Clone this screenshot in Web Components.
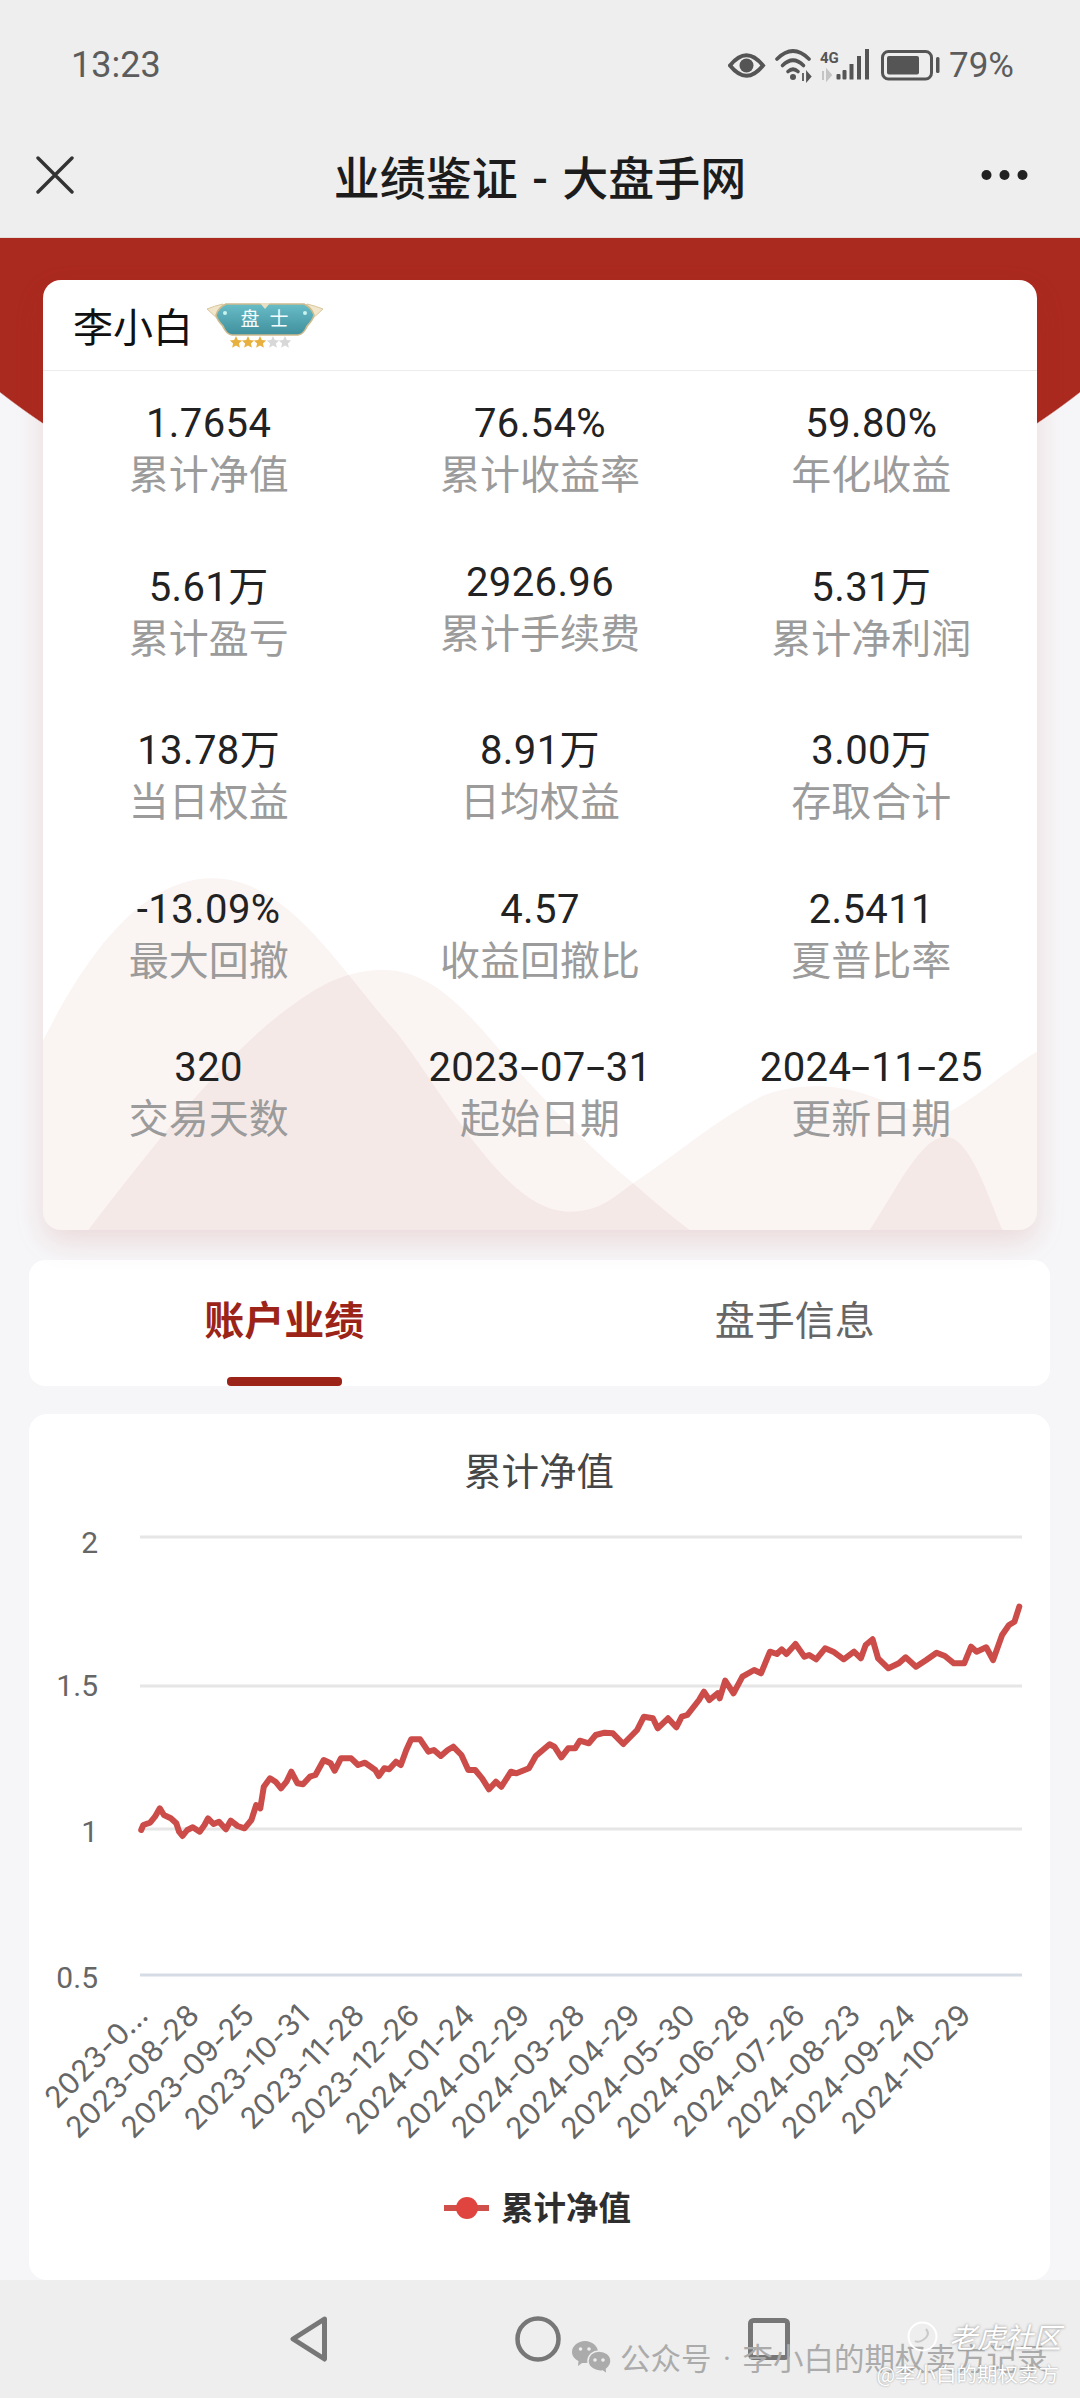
<!DOCTYPE html>
<html lang="zh">
<head>
<meta charset="utf-8">
<title>业绩鉴证 - 大盘手网</title>
<style>
  html, body { margin: 0; padding: 0; }
  body { width: 1080px; height: 2398px; overflow: hidden; font-family: Roboto, "Noto Sans CJK SC", sans-serif; }
</style>
</head>
<body>
<app-page>
  <status-bar slot="top" time="13:23" battery="79%"></status-bar>
  <title-bar slot="top">业绩鉴证 - 大盘手网</title-bar>

  <stat-card>
    <span slot="name">李小白</span>
    <stat-item value="1.7654">累计净值</stat-item>
    <stat-item value="76.54%">累计收益率</stat-item>
    <stat-item value="59.80%">年化收益</stat-item>
    <stat-item value="5.61万" wan>累计盈亏</stat-item>
    <stat-item value="2926.96">累计手续费</stat-item>
    <stat-item value="5.31万" wan>累计净利润</stat-item>
    <stat-item value="13.78万" wan>当日权益</stat-item>
    <stat-item value="8.91万" wan>日均权益</stat-item>
    <stat-item value="3.00万" wan>存取合计</stat-item>
    <stat-item value="-13.09%">最大回撤</stat-item>
    <stat-item value="4.57">收益回撤比</stat-item>
    <stat-item value="2.5411">夏普比率</stat-item>
    <stat-item value="320">交易天数</stat-item>
    <stat-item value="2023-07-31">起始日期</stat-item>
    <stat-item value="2024-11-25">更新日期</stat-item>
  </stat-card>

  <tab-bar>
    <tab-item active>账户业绩</tab-item>
    <tab-item>盘手信息</tab-item>
  </tab-bar>

  <nav-chart></nav-chart>

  <bottom-nav slot="bottom"></bottom-nav>
</app-page>

<script>
const CJK = 'Roboto, "Noto Sans CJK SC", sans-serif';

// Page frame: top bars, scrolling content with the red arc behind it, bottom nav
class AppPage extends HTMLElement {
  constructor() {
    super();
    this.attachShadow({ mode: 'open' });
    this.shadowRoot.innerHTML = `
      <style>
        :host { display: flex; flex-direction: column; width: 1080px; height: 2398px; font-family: ${CJK}; }
        main {
          flex: 1; min-height: 0; display: flex; flex-direction: column; padding-top: 42px;
          background: radial-gradient(760px 587px at 540px -258px, #ab2a1f 99.8%, rgba(171,42,31,0) 100%), #f6f6f8;
        }
      </style>
      <slot name="top"></slot>
      <main><slot></slot></main>
      <slot name="bottom"></slot>`;
  }
}

// Phone status bar
class StatusBar extends HTMLElement {
  constructor() {
    super();
    this.attachShadow({ mode: 'open' });
  }

  connectedCallback() {
    this.shadowRoot.innerHTML = `
      <style>
        :host { display: flex; align-items: center; justify-content: space-between; height: 130px; padding: 0 66px 0 71px; background: #eeeeee; color: #5c5c5c; font-size: 36px; box-sizing: border-box; }
        .right { display: flex; align-items: center; gap: 9px; }
        .right span { font-size: 35px; }
        svg { display: block; }
      </style>
      <span>${this.getAttribute('time')}</span>
      <div class="right">
        <svg width="212" height="36" viewBox="727 48 212 36" fill="none">
          <path d="M729 66.5Q745.5 46 762 66.5Q745.5 87 729 66.5Z" stroke="#555" stroke-width="4"/>
          <circle cx="745.5" cy="66.5" r="7" fill="#555"/>
          <g stroke="#555" stroke-width="3.6" stroke-linecap="round">
            <path d="M776 60Q792 44 808 60"/>
            <path d="M781.5 66.5Q792 56 802.5 66.5"/>
            <path d="M787 72.5Q792 68 797 72.5"/>
          </g>
          <circle cx="792" cy="78" r="3" fill="#555"/>
          <path d="M802 74v8M806 73.5l3.500 4-3.500 4z" stroke="#555" stroke-width="1.800" fill="#555"/>
          <text x="819" y="64" font-family="'Liberation Sans Narrow', Roboto, sans-serif" font-size="15" font-weight="700" fill="#555">4G</text>
          <path d="M822 72v9M826 71.500l4 4.500-4 4.500z" stroke="#c4c4c4" stroke-width="2" fill="#c4c4c4"/>
          <g fill="#555">
            <rect x="835.500" y="75" width="4" height="5.500" rx="1"/>
            <rect x="841.500" y="71" width="4" height="9.500" rx="1"/>
            <rect x="848.500" y="65" width="4" height="15.500"/>
            <rect x="856" y="57" width="4" height="23.500"/>
            <rect x="864" y="50" width="4" height="30.500"/>
          </g>
          <rect x="881.500" y="52.500" width="49" height="27.500" rx="6" stroke="#555" stroke-width="3"/>
          <rect x="886" y="57" width="32" height="18.500" rx="2" fill="#555"/>
          <rect x="935" y="58" width="3.500" height="16" rx="1.500" fill="#555"/>
        </svg>
        <span>${this.getAttribute('battery')}</span>
      </div>`;
  }
}

// WeChat style title bar with close and more buttons
class TitleBar extends HTMLElement {
  constructor() {
    super();
    this.attachShadow({ mode: 'open' });
    this.shadowRoot.innerHTML = `
      <style>
        :host { display: grid; grid-template-columns: 1fr auto 1fr; align-items: center; height: 108px; padding: 0 36px 18px; box-sizing: border-box; background: #eeeeee; border-bottom: 1px solid #e4ded8; color: #1c1c1c; }
        .title { font-size: 46px; font-weight: 500; word-spacing: 3px; }
        .more { justify-self: end; margin-right: 16px; }
        svg { display: block; }
      </style>
      <svg width="38" height="38" viewBox="0 0 38 38" fill="none" stroke="#333" stroke-width="3.4" stroke-linecap="round"><path d="M2 2L36 36M36 2L2 36"/></svg>
      <div class="title"><slot></slot></div>
      <svg class="more" width="47" height="12" viewBox="0 0 47 12" fill="#222"><circle cx="5.500" cy="6" r="5"/><circle cx="23.500" cy="6" r="5"/><circle cx="41.500" cy="6" r="5"/></svg>`;
  }
}

// Rank badge next to the trader name
class RankBadge extends HTMLElement {
  constructor() {
    super();
    this.attachShadow({ mode: 'open' });
    const star = (x, c) => `<path transform="translate(${x} 345)" d="M0-6L1.800-1.900 6.200-1.500 2.900 1.400 3.900 5.800 0 3.500-3.900 5.800-2.900 1.400-6.200-1.500-1.800-1.900Z" fill="${c}"/>`;
    this.shadowRoot.innerHTML = `
      <style>
        :host { display: block; width: 116px; height: 46px; }
        svg { display: block; }
        text { font-family: "Noto Sans CJK SC", sans-serif; font-size: 19px; fill: #f4fcfc; text-anchor: middle; }
      </style>
      <svg width="116" height="46" viewBox="207 305 116 46">
        <defs><linearGradient id="teal" x1="0" y1="0" x2="0" y2="1"><stop offset="0" stop-color="#68bdc7"/><stop offset="1" stop-color="#408f9d"/></linearGradient></defs>
        <path d="M207 312Q214 309 223 307L231 336 224 332 219 323Z" fill="#f1e5ca" stroke="#d8c69c"/>
        <path d="M323 312Q316 309 307 307L299 336 306 332 311 323Z" fill="#f1e5ca" stroke="#d8c69c"/>
        <path d="M226 307H304Q312 311 314 318Q313 323 307 329Q304 337 298 338H232Q226 337 223 329Q217 323 216 318Q218 311 226 307Z" fill="url(#teal)" stroke="#cdbb8e" stroke-width="1.500"/>
        <path d="M260 306h10l-5 6z" fill="#eadfc2"/>
        <circle cx="225" cy="316" r="2" fill="#c8f3ee"/><circle cx="305" cy="316" r="2" fill="#c8f3ee"/>
        <text x="250" y="329">盘</text><text x="279" y="329">士</text>
        ${star(236, '#e8b13f')}${star(248, '#e8b13f')}${star(260, '#e8b13f')}${star(273, '#d8d8d8')}${star(285, '#d8d8d8')}
      </svg>`;
  }
}

// Summary card: name row, 3 column grid of stats, mountains behind the lower rows
class StatCard extends HTMLElement {
  constructor() {
    super();
    this.attachShadow({ mode: 'open' });
    this.shadowRoot.innerHTML = `
      <style>
        :host { display: block; position: relative; margin: 0 43px 30px; background: #fff; border-radius: 18px; box-shadow: 0 12px 30px rgba(171,42,31,.13); overflow: hidden; }
        header { display: flex; align-items: center; gap: 14px; height: 90px; padding-left: 30px; border-bottom: 1px solid #ececec; font-size: 40px; color: #111; }
        .grid { position: relative; display: grid; grid-template-columns: repeat(3, 1fr); align-items: start; row-gap: 53.5px; padding: 29px 0 81px; }
        svg.bg { position: absolute; left: -3px; top: 580px; width: 1000px; height: 380px; }
        svg.bg path { fill: rgba(150,30,20,.05); }
      </style>
      <svg class="bg" viewBox="0 0 1568 1140" preserveAspectRatio="none">
        <path d="M0 560C60 330 150 55 270 55C390 55 470 330 560 520C640 720 730 1055 830 1055C880 1055 900 1010 930 970C1000 880 1060 780 1130 710C1180 670 1240 670 1290 700C1350 740 1400 790 1440 740C1490 680 1530 610 1568 570L1568 1140L0 1140Z"/>
        <path d="M75 1112C180 850 300 560 400 430C450 360 490 330 540 330C620 330 680 480 730 590C800 740 860 860 930 970C960 1020 990 1070 1020 1112Z"/>
        <path d="M1300 1112C1340 1000 1380 830 1420 830C1460 830 1490 1030 1510 1112Z"/>
      </svg>
      <header><slot name="name"></slot><rank-badge></rank-badge></header>
      <div class="grid"><slot></slot></div>`;
  }
}

// One figure in the grid; rows holding a 万 value sit a little lower
class StatItem extends HTMLElement {
  constructor() {
    super();
    this.attachShadow({ mode: 'open' });
  }

  connectedCallback() {
    const value = this.getAttribute('value') || '';
    // date hyphens are drawn wider in the reference
    const shown = /^\d{4}-/.test(value)
      ? value.replace(/-/g, '<span class="dash">-</span>')
      : value;
    this.shadowRoot.innerHTML = `
      <style>
        :host { display: block; text-align: center; }
        :host([wan]) { padding-top: 5px; }
        .value { font-size: 40px; line-height: 47px; color: #222; white-space: nowrap; letter-spacing: .4px; }
        .dash { display: inline-block; width: 20px; transform: scaleX(1.7); }
        .label { font-size: 40px; line-height: 58px; color: #9b9b9b; }
      </style>
      <div class="value">${shown}</div>
      <div class="label"><slot></slot></div>`;
  }
}

class TabBar extends HTMLElement {
  constructor() {
    super();
    this.attachShadow({ mode: 'open' });
    this.shadowRoot.innerHTML = `
      <style>
        :host { display: grid; grid-template-columns: 1fr 1fr; height: 126px; margin: 0 30px 0 29px; background: #fff; border-radius: 16px; }
      </style>
      <slot></slot>`;
  }
}

class TabItem extends HTMLElement {
  constructor() {
    super();
    this.attachShadow({ mode: 'open' });
    this.shadowRoot.innerHTML = `
      <style>
        :host { display: flex; flex-direction: column; align-items: center; font-size: 40px; color: #666; padding-top: 33px; box-sizing: border-box; }
        :host([active]) { color: #9c2318; font-weight: 700; }
        .text { line-height: 58px; }
        .bar { margin-top: auto; width: 115px; height: 9px; border-radius: 4px; background: transparent; }
        :host([active]) .bar { background: #9c2318; }
      </style>
      <div class="text"><slot></slot></div>
      <div class="bar"></div>`;
  }
}

// Net value line chart, coordinates in the SVG are page coordinates
class NavChart extends HTMLElement {
  constructor() {
    super();
    this.attachShadow({ mode: 'open' });
  }

  connectedCallback() {
    // traced from the reference, x is stretched 1.452 and y is (page - 1400) * 3
    const trace = [205,1290,208,1275,218,1268,225,1250,232,1225,238,1245,248,1255,256,1270,260,1295,265,1308,272,1290,280,1282,290,1295,297,1275,302,1255,310,1272,318,1265,328,1288,335,1262,345,1278,355,1285,365,1260,372,1215,378,1225,383,1160,392,1135,400,1145,408,1165,416,1145,423,1115,432,1150,440,1153,450,1130,458,1125,470,1080,480,1090,486,1112,495,1075,510,1075,520,1095,530,1088,545,1110,550,1128,558,1105,565,1108,575,1085,582,1095,590,1050,597,1018,610,1018,622,1055,630,1050,640,1068,650,1050,658,1040,670,1065,680,1110,690,1110,700,1135,710,1168,720,1145,728,1160,742,1115,750,1120,768,1105,778,1068,798,1033,805,1040,815,1072,825,1045,835,1045,842,1022,855,1030,865,1005,878,998,890,1000,905,1032,925,990,935,950,948,955,955,985,970,955,982,982,990,950,998,945,1015,900,1022,875,1030,900,1042,880,1045,895,1053,842,1065,880,1078,830,1095,810,1105,820,1118,755,1128,762,1135,748,1142,762,1155,732,1168,770,1175,765,1185,778,1198,745,1210,755,1225,778,1240,755,1250,775,1257,735,1267,718,1275,775,1290,805,1305,790,1315,772,1330,800,1345,780,1360,758,1372,768,1385,790,1400,790,1410,740,1418,755,1432,742,1442,780,1455,705,1465,675,1473,665,1480,620];
    const pts = [];
    for (let i = 0; i < trace.length; i += 2) {
      pts.push((trace[i] / 1.452).toFixed(1) + ',' + (trace[i + 1] / 3 + 1400).toFixed(1));
    }

    const grid = [[1537, '2', 1553], [1686, '1.5', 1696], [1829, '1', 1842], [1975, '0.5', 1988]];
    const gridSvg = grid.map(([y, t, by], i) => `
      <line x1="140" x2="1022" y1="${y}" y2="${y}" stroke="${i === 3 ? '#d5dce4' : '#e6e6e6'}" stroke-width="3"/>
      <text x="98" y="${by}" text-anchor="end" class="axis">${t}</text>`).join('');

    const dates = ['2023-0...', '2023-08-28', '2023-09-25', '2023-10-31', '2023-11-28', '2023-12-26', '2024-01-24', '2024-02-29', '2024-03-28', '2024-04-29', '2024-05-30', '2024-06-28', '2024-07-26', '2024-08-23', '2024-09-24', '2024-10-29'];
    const dateSvg = dates.map((d, i) => {
      const x = (i === 0 ? 150 : 146) + i * 55.1;
      return `<text x="${x}" y="2017" text-anchor="end" class="axis date" transform="rotate(-45 ${x} 2017)">${d}</text>`;
    }).join('');

    this.shadowRoot.innerHTML = `
      <style>
        :host { display: block; flex: 1; min-height: 0; margin: 28px 30px 0 29px; background: #fff; border-radius: 18px; overflow: hidden; }
        svg { display: block; }
        text { font-family: ${CJK}; }
        .axis { font-size: 30px; fill: #666; }
        .date { font-family: Inter, Roboto, sans-serif; font-size: 29.5px; letter-spacing: .2px; }
      </style>
      <svg width="1021" height="866" viewBox="29 1414 1021 866">
        <text x="539" y="1485" text-anchor="middle" font-size="37.500" fill="#464646">累计净值</text>
        ${gridSvg}
        ${dateSvg}
        <polyline points="${pts.join(' ')}" fill="none" stroke="#cb4c48" stroke-width="6" stroke-linejoin="round" stroke-linecap="round"/>
        <line x1="444" x2="489" y1="2208" y2="2208" stroke="#cf4f4b" stroke-width="6"/>
        <circle cx="467" cy="2208" r="11" fill="#e0443e"/>
        <text x="501" y="2220" font-size="32.500" font-weight="700" fill="#2e2e2e">累计净值</text>
      </svg>`;
  }
}

// Android nav keys, with the repost watermarks lying over them
class BottomNav extends HTMLElement {
  constructor() {
    super();
    this.attachShadow({ mode: 'open' });
    this.shadowRoot.innerHTML = `
      <style>
        :host { display: flex; position: relative; align-items: center; justify-content: center; gap: 187px; height: 118px; background: #eeeeee; }
        svg { display: block; }
        .mark { position: absolute; display: flex; align-items: center; white-space: nowrap; font-family: Roboto, "Noto Sans CJK SC", sans-serif; }
        .wx { left: 572px; top: 55px; gap: 9px; color: #ababab; font-size: 30.500px; word-spacing: 4px; }
        .tiger { left: 907px; top: 36px; gap: 11px; color: #fff; font-size: 28px; font-style: italic; text-shadow: 0 0 3px #8a8a8a; }
        .user { right: 21px; top: 78px; color: #fff; font-size: 20.500px; text-shadow: 0 0 2px #8f8f8f; }
      </style>
      <svg width="38" height="46" viewBox="0 0 38 46" fill="none" stroke="#777" stroke-width="5" stroke-linejoin="round"><path d="M34.500 3L3 23L34.500 43Z"/></svg>
      <svg width="46" height="46" viewBox="0 0 46 46" fill="none" stroke="#777" stroke-width="4.500"><circle cx="23" cy="23" r="20.500"/></svg>
      <svg width="42" height="42" viewBox="0 0 42 42" fill="none" stroke="#777" stroke-width="5"><rect x="2.500" y="2.500" width="37" height="37" rx="3"/></svg>
      <div class="mark wx">
        <svg width="39" height="33" viewBox="0 0 39 33">
          <path d="M13 0C20 0 26 5 26 11C26 17 20 22 13 22L10 22L6 25L6.500 20C2.500 18 0 15 0 11C0 5 6 0 13 0Z" fill="#ababab"/>
          <path d="M27 10C33.500 10 39 14 39 20C39 23.500 37 26 34.500 28L35 33L30.500 30C24 31 16 27 16 20C16 14 21 10 27 10Z" fill="#ababab" stroke="#eee" stroke-width="1.500"/>
          <circle cx="8.500" cy="8" r="1.800" fill="#eee"/><circle cx="17" cy="8" r="1.800" fill="#eee"/>
          <circle cx="23" cy="19" r="1.800" fill="#eee"/><circle cx="31" cy="19" r="1.800" fill="#eee"/>
        </svg>
        <span>公众号 · 李小白的期权卖方记录</span>
      </div>
      <div class="mark tiger">
        <svg width="31" height="31" viewBox="0 0 31 31" fill="none" stroke="#fff" stroke-width="2"><circle cx="15.500" cy="15.500" r="14"/><path d="M19 8Q24 14 16 19Q11 22 8 20" stroke="#c9c9c9"/></svg>
        <span>老虎社区</span>
      </div>
      <div class="mark user">@李小白的期权卖方</div>`;
  }
}

customElements.define('app-page', AppPage);
customElements.define('status-bar', StatusBar);
customElements.define('title-bar', TitleBar);
customElements.define('rank-badge', RankBadge);
customElements.define('stat-card', StatCard);
customElements.define('stat-item', StatItem);
customElements.define('tab-bar', TabBar);
customElements.define('tab-item', TabItem);
customElements.define('nav-chart', NavChart);
customElements.define('bottom-nav', BottomNav);
</script>
</body>
</html>
